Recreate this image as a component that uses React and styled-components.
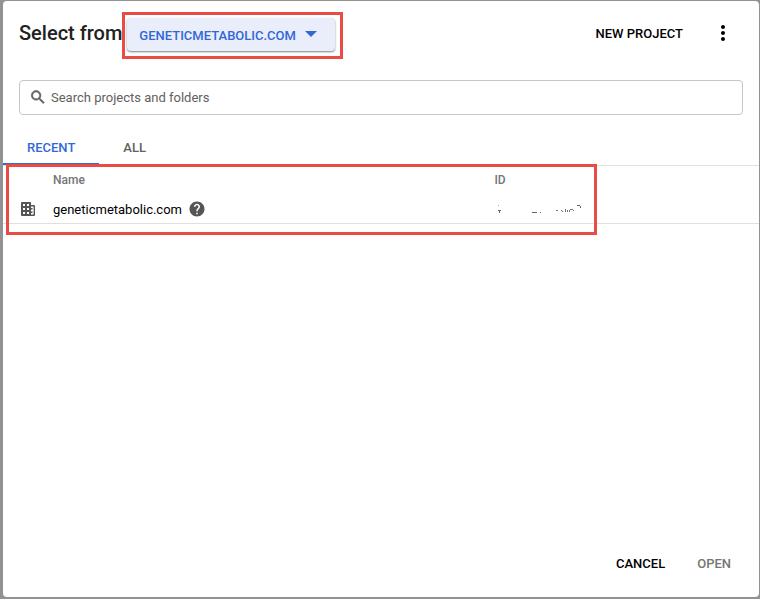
import React, { useState } from 'react';
import styled, { createGlobalStyle } from 'styled-components';

const GlobalStyle = createGlobalStyle`
  * {
    box-sizing: border-box;
  }
  body {
    margin: 0;
    background: #929292;
    font-family: Roboto, 'Liberation Sans', sans-serif;
    font-size: 13px;
    color: #000;
  }
`;

const Page = styled.div`
  display: flex;
  min-height: 100vh;
  padding: 1px 1px 2px 3px;
`;

const Dialog = styled.main`
  flex: 1;
  display: flex;
  flex-direction: column;
  min-width: 0;
  background: #fff;
  border-radius: 4px;
`;

const Header = styled.header`
  display: flex;
  align-items: center;
  height: 64px;
  padding: 0 24px 0 16px;
`;

const Title = styled.h1`
  margin: 0;
  font-size: 20px;
  line-height: 24px;
  font-weight: 500;
  color: #212121;
`;

const Spacer = styled.div`
  flex: 1;
`;

const Highlight = styled.div`
  position: absolute;
  inset: ${props => props.$inset};
  border: 3px solid #e94b45;
  pointer-events: none;
`;

const PickerWrapper = styled.div`
  position: relative;
  margin: 2px 0 0 5px;
`;

const PickerButton = styled.button`
  display: flex;
  align-items: center;
  gap: 9px;
  height: 33px;
  padding: 0 18px 0 12px;
  border: 0;
  border-radius: 4px;
  background: #e9eefa;
  box-shadow: 0 1px 2px rgba(0, 0, 0, 0.5);
  font: 500 13px/16px Roboto, sans-serif;
  color: #3367d6;
`;

const PickerLabel = styled.span`
  padding-top: 4px;
`;

const TextButton = styled.button`
  padding: 9px 8px 7px;
  border: 0;
  background: none;
  font: 500 13px/16px Roboto, sans-serif;
  color: ${props => (props.disabled ? '#757575' : '#000')};
`;

const IconButton = styled.button`
  display: flex;
  margin-left: 20px;
  padding: 0;
  border: 0;
  background: none;
`;

const Icon = styled.svg`
  display: block;
  flex: none;
  fill: ${props => props.$color || '#000'};
`;

const SearchBox = styled.label`
  display: flex;
  align-items: center;
  gap: 4px;
  height: 35px;
  margin: 15px 16px 0;
  padding: 0 9px;
  border: 1px solid #c6c6c6;
  border-radius: 4px;
`;

const SearchInput = styled.input`
  flex: 1;
  min-width: 0;
  padding: 0;
  border: 0;
  outline: 0;
  background: none;
  font: 400 13px/16px Roboto, sans-serif;
  &::placeholder {
    color: #616161;
    opacity: 1;
  }
`;

const Tabs = styled.div`
  display: flex;
  height: 51px;
  padding-top: 16px;
  border-bottom: 1px solid #e0e0e0;
`;

const Tab = styled.button`
  padding: 2px 24px 0;
  border: 0;
  border-bottom: 2px solid ${props => (props.$active ? '#3367d6' : 'transparent')};
  background: none;
  font: 500 13px/16px Roboto, sans-serif;
  color: ${props => (props.$active ? '#3367d6' : '#616161')};
`;

const Results = styled.section`
  flex: 1;
`;

const ResultsArea = styled.div`
  position: relative;
`;

const Table = styled.table`
  width: 100%;
  table-layout: fixed;
  border-collapse: separate;
  border-spacing: 0;
`;

const HeadCell = styled.th`
  width: ${props => props.$width || 'auto'};
  height: 28px;
  padding: 0;
  text-align: left;
  font-size: 12px;
  line-height: 16px;
  font-weight: 500;
  color: #757575;
`;

const Cell = styled.td`
  height: 30px;
  padding: 0 0 0 ${props => props.$indent || '0'};
  border-bottom: 1px solid #e0e0e0;
  line-height: 16px;
`;

const NameCell = styled.div`
  display: flex;
  align-items: center;
  gap: 6px;
`;

const NameText = styled.span`
  padding-top: 2px;
`;

const Footer = styled.footer`
  display: flex;
  justify-content: flex-end;
  gap: 16px;
  padding: 0 20px 18px;
`;

const SearchIcon = () => (
  <Icon width="18" height="18" viewBox="0 1 24 24" $color="#616161" stroke="#616161" strokeWidth="0.7" aria-hidden="true">
    <path d="M15.5 14h-.79l-.28-.27A6.47 6.47 0 0 0 16 9.5 6.5 6.5 0 1 0 9.5 16c1.61 0 3.09-.59 4.23-1.57l.27.28v.79l5 4.99L20.49 19l-4.99-5zm-6 0C7.01 14 5 11.99 5 9.5S7.01 5 9.5 5 14 7.01 14 9.5 11.99 14 9.5 14z" />
  </Icon>
);

const MoreIcon = () => (
  <Icon width="24" height="24" viewBox="0 0 24 24" aria-hidden="true">
    <path d="M12 8c1.1 0 2-.9 2-2s-.9-2-2-2-2 .9-2 2 .9 2 2 2zm0 2c-1.1 0-2 .9-2 2s.9 2 2 2 2-.9 2-2-.9-2-2-2zm0 6c-1.1 0-2 .9-2 2s.9 2 2 2 2-.9 2-2-.9-2-2-2z" />
  </Icon>
);

const BuildingIcon = () => (
  <Icon width="14" height="14" viewBox="0 0 14 14" $color="#555" aria-hidden="true">
    <path
      fillRule="evenodd"
      d="M1 0h8q1 0 1 1v2h3q1 0 1 1v9q0 1-1 1H1q-1 0-1-1V1q0-1 1-1zM2 2v2h2V2zM6 2v2h2V2zM2 6v2h2V6zM6 6v2h2V6zM2 10v2h2v-2zM6 10v2h2v-2zM10 4.5v8h2.6v-8z"
    />
    <path d="M10 6h1.5v1.5H10zM10 9.5h1.5V11H10z" />
  </Icon>
);

const HelpIcon = () => (
  <Icon width="18" height="18" viewBox="0 0 24 24" $color="#555" aria-hidden="true">
    <path d="M12 2C6.48 2 2 6.48 2 12s4.48 10 10 10 10-4.48 10-10S17.52 2 12 2zm1 17h-2v-2h2v2zm2.07-7.75l-.9.92C13.45 12.9 13 13.5 13 15h-2v-.5c0-1.1.45-2.1 1.17-2.83l1.24-1.26c.37-.36.59-.86.59-1.41 0-1.1-.9-2-2-2s-2 .9-2 2H8c0-2.21 1.79-4 4-4s4 1.79 4 4c0 .88-.36 1.68-.93 2.25z" />
  </Icon>
);

// Leftover specks of the erased organization id.
const ErasedId = () => (
  <Icon width="90" height="14" viewBox="0 0 90 14" $color="#666" role="img" aria-label="Hidden ID">
    <path fill="#d9a066" d="M4 3h1v1H4z" />
    <path d="M4 8h3v1H4zM5 9h1v2H5z" />
    <path d="M38 10h5v1h-5zM46 10h1v1h-1z" />
    <path
      fill="#777"
      d="M62 8h2v1h-2zM67 8h1v1h-1zM68 9h1v1h-1zM71 7h1v3h-1zM73 8h1v2h-1zM75 8h1v2h-1zM76 7h3v1h-3zM79 8h1v1h-1z"
    />
    <path d="M83 3h3v1h-3zM86 4h1v2h-1z" />
  </Icon>
);

const tabs = ['RECENT', 'ALL'];

const App = () => {
  const [active, setActive] = useState('RECENT');

  return (
    <Page>
      <GlobalStyle />
      <Dialog>
        <Header>
          <Title>Select from</Title>
          <PickerWrapper>
            <PickerButton type="button">
              <PickerLabel>GENETICMETABOLIC.COM</PickerLabel>
              <Icon width="12" height="6" viewBox="0 0 12 6" $color="#3367d6" aria-hidden="true">
                <path d="M0 0h12L6 6z" />
              </Icon>
            </PickerButton>
            <Highlight $inset="-6px -8px -8px -5px" />
          </PickerWrapper>
          <Spacer />
          <TextButton type="button">NEW PROJECT</TextButton>
          <IconButton type="button" aria-label="More options">
            <MoreIcon />
          </IconButton>
        </Header>
        <SearchBox>
          <SearchIcon />
          <SearchInput
            type="text"
            aria-label="Search projects and folders"
            placeholder="Search projects and folders"
          />
        </SearchBox>
        <Tabs role="tablist">
          {tabs.map(tab => (
            <Tab
              key={tab}
              type="button"
              role="tab"
              aria-selected={tab === active}
              $active={tab === active}
              onClick={() => setActive(tab)}
            >
              {tab}
            </Tab>
          ))}
        </Tabs>
        <Results>
          <ResultsArea>
            <Table>
              <thead>
                <tr>
                  <HeadCell $width="50px" aria-label="Type" />
                  <HeadCell>Name</HeadCell>
                  <HeadCell $width="35%">ID</HeadCell>
                </tr>
              </thead>
              <tbody>
                <tr>
                  <Cell $indent="18px">
                    <BuildingIcon />
                  </Cell>
                  <Cell>
                    <NameCell>
                      <NameText>geneticmetabolic.com</NameText>
                      <HelpIcon />
                    </NameCell>
                  </Cell>
                  <Cell>
                    <ErasedId />
                  </Cell>
                </tr>
              </tbody>
            </Table>
            <Highlight $inset="-2px 162px -11px 3px" />
          </ResultsArea>
        </Results>
        <Footer>
          <TextButton type="button">CANCEL</TextButton>
          <TextButton type="button" disabled>
            OPEN
          </TextButton>
        </Footer>
      </Dialog>
    </Page>
  );
};

export default App;
